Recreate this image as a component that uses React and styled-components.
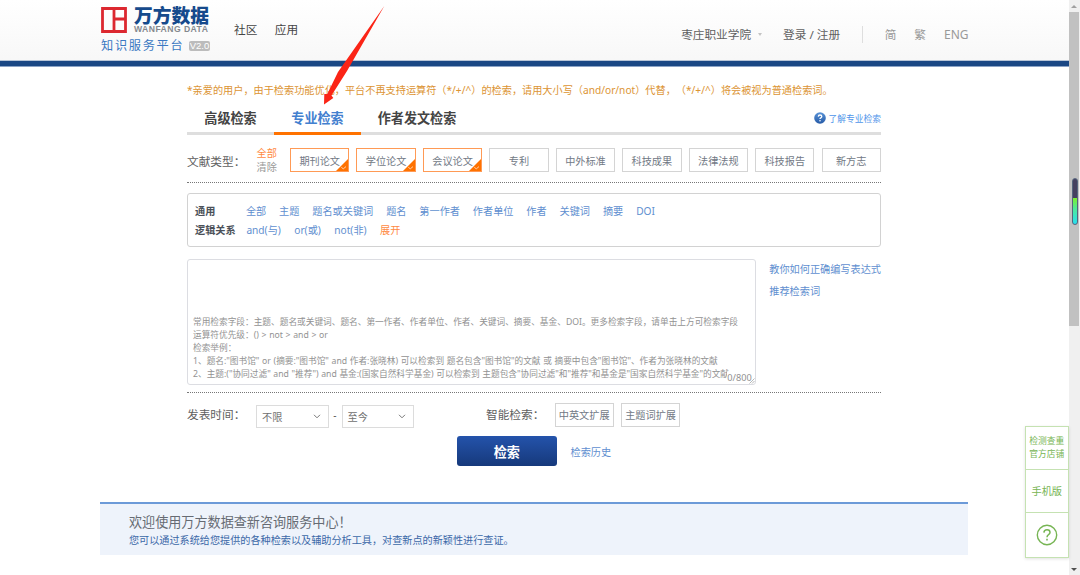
import React from 'react';
import styled, { createGlobalStyle } from 'styled-components';

const GlobalStyle = createGlobalStyle`
    * {
        box-sizing: border-box;
    }

    body {
        margin: 0;
        overflow: hidden;
        background: #fff;
        color: #555;
        font-family: "Noto Sans", "Noto Sans CJK SC", sans-serif;
        font-size: 10.17px;
        text-spacing-trim: space-all;
    }
`;

const Page = styled.div`
    position: relative;
    display: flex;
    width: 1080px;
    height: 575px;
    overflow: hidden;
    white-space: nowrap;
`;

const Content = styled.div`
    flex: 1;
    min-width: 0;
`;

const Header = styled.header`
    display: flex;
    height: 67px;
    padding: 0 100px 0 101px;
    background: linear-gradient(#fff, #f7f7f7);
    border-bottom: 1px solid #8ba3c6;
    box-shadow: inset 0 -5px 0 #1a4784, inset 0 -6px 0 #b7c4d6;
`;

const Logo = styled.div`
    width: 109px;
    padding-top: 7px;
`;

const LogoTop = styled.div`
    display: flex;
    gap: 7px;
    height: 27px;
`;

const LogoName = styled.div`
    height: 18px;
    line-height: 18px;
    font-size: 18.8px;
    font-weight: 900;
    color: #164a8c;
`;

const LogoLatin = styled.div`
    height: 9px;
    line-height: 9px;
    font-family: "Liberation Sans", sans-serif;
    font-size: 8.6px;
    font-weight: 700;
    letter-spacing: 0.45px;
    color: #85888e;
`;

const LogoBottom = styled.div`
    display: flex;
    align-items: center;
    justify-content: space-between;
    height: 21px;
    font-size: 12.2px;
    letter-spacing: 1.7px;
    color: #3b78c2;
`;

const Version = styled.span`
    width: 21px;
    height: 10px;
    margin-top: 2px;
    border-radius: 2px;
    background: #bcbcbc;
    color: #fff;
    font-family: "Liberation Sans", sans-serif;
    font-size: 9.5px;
    line-height: 10px;
    letter-spacing: 0;
    text-align: center;
`;

const Nav = styled.nav`
    display: flex;
    gap: 17.5px;
    padding: 20px 0 0 24px;
    font-size: 11.67px;
    line-height: 20px;
    color: #444;
`;

const UserNav = styled(Nav)`
    gap: 0;
    margin-left: auto;
    padding: 25px 0 0;
    color: #606060;
`;

const Caret = styled.span`
    width: 0;
    height: 0;
    margin: 8px 21px 0 7px;
    border: 2.5px solid transparent;
    border-top: 3px solid #c4c4c4;
`;

const Divider = styled.span`
    width: 1px;
    height: 17px;
    margin: 1px 22px 0 21.5px;
    background: #dedede;
`;

const Lang = styled.span`
    margin-right: ${props => props.$last ? 0 : '18px'};
    color: #999;
    font-size: ${props => props.$last ? '12px' : '11.67px'};
`;

const Main = styled.main`
    width: 694px;
    margin-left: 187px;
`;

const Notice = styled.div`
    height: 33px;
    padding-top: 13px;
    line-height: 20px;
    color: #dc9433;
`;

const Tabs = styled.div`
    display: flex;
    height: 35px;
    box-shadow: inset 0 -3px 0 #dedede;
`;

const Tab = styled.div`
    width: ${props => props.$wide ? '112px' : '87px'};
    padding-top: 8px;
    border-bottom: 3px solid ${props => props.$active ? '#ff7200' : 'transparent'};
    color: ${props => props.$active ? '#4380cf' : '#444'};
    font-size: 13.1px;
    font-weight: 700;
    line-height: 20px;
    text-align: center;
`;

const TabHelp = styled.a`
    display: flex;
    align-items: center;
    gap: 3px;
    height: 20px;
    margin: 8px 0 0 auto;
    color: #5095ea;
    font-size: 8.75px;
`;

const TypeRow = styled.div`
    display: flex;
    align-items: center;
    height: 48px;
    padding-top: 3px;
    border-bottom: 1px dotted #777;
`;

const Label = styled.span`
    width: ${props => props.$width};
    color: #606060;
    font-size: 11.67px;
`;

const AllOrNone = styled.div`
    width: 33.5px;
    line-height: 14px;
    color: #999;
`;

const Orange = styled.span`
    color: #ff8a42;
`;

const TypeList = styled.div`
    display: flex;
    flex: 1;
    justify-content: space-between;
`;

const Tag = styled.span`
    position: relative;
    display: flex;
    align-items: center;
    justify-content: center;
    width: 59.4px;
    height: 24px;
    border: 1px solid ${props => props.$checked ? '#ff9a55' : '#d4d4d4'};
    color: #727985;
`;

const Corner = styled.svg`
    position: absolute;
    right: 0;
    bottom: 0;
`;

const FieldBox = styled.div`
    height: 54px;
    margin-top: 10px;
    padding: 8px 7px;
    border: 1px solid #d2d2d2;
    border-radius: 3px;
`;

const FieldRow = styled.div`
    display: flex;
    gap: ${props => props.$gap || '12.9px'};
    height: 19px;
    line-height: 19px;
    color: #5f8fd0;
`;

const FieldName = styled.b`
    width: 38px;
    color: #4b5058;
`;

const Editor = styled.div`
    display: flex;
    height: 146px;
    padding-top: 12px;
    border-bottom: 1px dotted #777;
`;

const TextBox = styled.div`
    position: relative;
    width: 570px;
    height: 126px;
    padding: 56.4px 5px 0;
    border: 1px solid #dcdde2;
    border-radius: 3px;
    color: #929292;
    font-size: 8.69px;
    line-height: 12.9px;
    word-spacing: 0.4px;
`;

const Counter = styled.span`
    position: absolute;
    right: 3px;
    bottom: 0;
    background: #fff;
    font-size: 9.2px;
    line-height: 12px;
`;

const Grip = styled.svg`
    position: absolute;
    right: 0;
    bottom: 0;
`;

const SideLinks = styled.div`
    padding-left: 13.5px;
    color: #5f8fd0;
    line-height: 21.8px;
`;

const OptionRow = styled.div`
    display: flex;
    height: 43px;
    padding-top: 10px;
    line-height: 24px;
`;

const Select = styled.div`
    display: flex;
    align-items: center;
    justify-content: space-between;
    width: 72.5px;
    height: 23px;
    margin-top: 2px;
    padding: 0 7px 0 5px;
    border: 1px solid #dcdcdc;
    color: #707070;
`;

const Dash = styled.span`
    width: 13px;
    text-align: center;
`;

const SmartSearch = styled.div`
    display: flex;
    gap: 7px;
    margin-left: 72px;
`;

const Actions = styled.div`
    display: flex;
    align-items: center;
    gap: 14px;
    padding-left: 270px;
    color: #5f8fd0;
`;

const Button = styled.button`
    width: 99.5px;
    height: 30px;
    padding: 0;
    border: none;
    border-radius: 3px;
    background: linear-gradient(#2453ab, #16397b);
    color: #fff;
    font-family: inherit;
    font-size: 13.1px;
    font-weight: 700;
`;

const Welcome = styled.section`
    width: 868px;
    height: 53px;
    margin: 36px 0 0 100px;
    padding: 9px 29px 0;
    border-top: 2px solid #6c9ad8;
    background: #eef3fb;
`;

const WelcomeTitle = styled.div`
    height: 19px;
    line-height: 19px;
    color: #666b73;
    font-size: 13.1px;
`;

const WelcomeText = styled.div`
    line-height: 17px;
    color: #3b68a8;
    font-size: 10.13px;
`;

const Scrollbar = styled.div`
    display: flex;
    flex-direction: column;
    align-items: center;
    width: 11.5px;
    background: #f0f0f0;
`;

const Thumb = styled.div`
    width: 10px;
    height: 314px;
    background: #c1c1c1;
`;

const ScrollArrow = styled.span`
    width: 0;
    height: 0;
    margin: ${props => props.$down ? 'auto 0 4px' : '5px 0 4px'};
    border: 3px solid transparent;
    border-${props => props.$down ? 'top' : 'bottom'}-color: ${props => props.$down ? '#505050' : '#a0a0a0'};
    border-${props => props.$down ? 'bottom' : 'top'}-width: 0;
`;

const Gauge = styled.div`
    position: absolute;
    top: 178px;
    right: 2px;
    width: 6px;
    height: 47px;
    border: 1px solid #55647c;
    border-radius: 3px;
    background: linear-gradient(#45405f 19px, #7cf02c 19px, #4de99b 30px, #27dff0);
`;

const FloatMenu = styled.div`
    position: absolute;
    top: 426px;
    right: 11.5px;
    width: 43.5px;
    border: 1px solid #c5e2b2;
    background: #fff;
    box-shadow: 0 1px 3px rgba(0, 0, 0, 0.12);
    color: #77b554;
`;

const FloatItem = styled.div`
    display: flex;
    align-items: center;
    justify-content: center;
    height: 43.2px;
    border-bottom: ${props => props.$last ? 'none' : '1px solid #c5e2b2'};
    font-size: ${props => props.$small ? '8.75px' : '10.2px'};
    line-height: 13px;
`;

const Pointer = styled.svg`
    position: absolute;
    top: 0;
    left: 310px;
`;

const types = ['期刊论文', '学位论文', '会议论文', '专利', '中外标准', '科技成果', '法律法规', '科技报告', '新方志'];
const checkedTypes = 3;
const fields = ['全部', '主题', '题名或关键词', '题名', '第一作者', '作者单位', '作者', '关键词', '摘要', 'DOI'];
const operators = ['and(与)', 'or(或)', 'not(非)'];

const ChevronDown = () => (
    <svg width="8" height="5" viewBox="0 0 8 5">
        <path d="M1 0.8 L4 3.8 L7 0.8" fill="none" stroke="#777" strokeWidth="1" />
    </svg>
);

const SiteHeader = () => (
    <Header>
        <Logo>
            <LogoTop>
                <svg width="26" height="26" viewBox="0 0 26 26">
                    <path d="M1.5 1.5 H24.5 V24.5 H1.5 Z M13 1.5 V24.5 M13 12 H24.5" fill="none" stroke="#dc2830" strokeWidth="2.8" />
                </svg>
                <div>
                    <LogoName>万方数据</LogoName>
                    <LogoLatin>WANFANG DATA</LogoLatin>
                </div>
            </LogoTop>
            <LogoBottom>知识服务平台<Version>V2.0</Version></LogoBottom>
        </Logo>
        <Nav><span>社区</span><span>应用</span></Nav>
        <UserNav>
            <span>枣庄职业学院</span>
            <Caret />
            <span>登录 / 注册</span>
            <Divider />
            <Lang>简</Lang>
            <Lang>繁</Lang>
            <Lang $last>ENG</Lang>
        </UserNav>
    </Header>
);

const SearchTabs = () => (
    <Tabs>
        <Tab>高级检索</Tab>
        <Tab $active>专业检索</Tab>
        <Tab $wide>作者发文检索</Tab>
        <TabHelp>
            <svg width="12" height="12" viewBox="0 0 12 12">
                <defs>
                    <linearGradient id="help" x1="0" y1="0" x2="0" y2="1">
                        <stop offset="0" stopColor="#5a94d8" />
                        <stop offset="1" stopColor="#2459a6" />
                    </linearGradient>
                </defs>
                <circle cx="6" cy="6" r="5.8" fill="url(#help)" />
                <path d="M4.3 4.6 Q4.4 3 6 3 Q7.8 3 7.8 4.5 Q7.8 5.3 6.8 5.8 Q6 6.2 6 7.1" fill="none" stroke="#fff" strokeWidth="1.3" />
                <circle cx="6" cy="8.8" r="0.8" fill="#fff" />
            </svg>
            了解专业检索
        </TabHelp>
    </Tabs>
);

const TypeTag = ({ name, checked }) => (
    <Tag $checked={checked}>
        {name}
        {checked && <Corner width="12" height="12" viewBox="0 0 12 12">
            <path d="M12 0 V12 H0 Z" fill="#ff7200" />
            <path d="M5.3 8.3 L7.3 9.8 L10 7.6" fill="none" stroke="#ffd9bb" strokeWidth="0.9" />
        </Corner>}
    </Tag>
);

const App = () => {
    return <Page>
        <GlobalStyle />
        <Content>
            <SiteHeader />
            <Main>
                <Notice>*亲爱的用户，由于检索功能优化，平台不再支持运算符（*/+/^）的检索，请用大小写（and/or/not）代替，（*/+/^）将会被视为普通检索词。</Notice>
                <SearchTabs />
                <TypeRow>
                    <Label $width="69.5px">文献类型：</Label>
                    <AllOrNone><Orange>全部</Orange><br />清除</AllOrNone>
                    <TypeList>
                        {types.map((name, i) => <TypeTag key={name} name={name} checked={i < checkedTypes} />)}
                    </TypeList>
                </TypeRow>
                <FieldBox>
                    <FieldRow>
                        <FieldName>通用</FieldName>
                        {fields.map(name => <span key={name}>{name}</span>)}
                    </FieldRow>
                    <FieldRow $gap="13.4px">
                        <FieldName>逻辑关系</FieldName>
                        {operators.map(name => <span key={name}>{name}</span>)}
                        <Orange>展开</Orange>
                    </FieldRow>
                </FieldBox>
                <Editor>
                    <TextBox>
                        <div>常用检索字段：主题、题名或关键词、题名、第一作者、作者单位、作者、关键词、摘要、基金、DOI。更多检索字段，请单击上方可检索字段</div>
                        <div>运算符优先级：() &gt; not &gt; and &gt; or</div>
                        <div>检索举例：</div>
                        <div>1、题名:"图书馆" or (摘要:"图书馆" and 作者:张晓林) 可以检索到 题名包含"图书馆"的文献 或 摘要中包含"图书馆"、作者为张晓林的文献</div>
                        <div>2、主题:("协同过滤" and "推荐") and 基金:(国家自然科学基金) 可以检索到 主题包含"协同过滤"和"推荐"和基金是"国家自然科学基金"的文献</div>
                        <Counter>0/800</Counter>
                        <Grip width="6" height="6" viewBox="0 0 6 6">
                            <path d="M0.5 5.5 L5.5 0.5 M3 5.5 L5.5 3" stroke="#999" strokeWidth="0.7" />
                        </Grip>
                    </TextBox>
                    <SideLinks>
                        <div>教你如何正确编写表达式</div>
                        <div>推荐检索词</div>
                    </SideLinks>
                </Editor>
                <OptionRow>
                    <Label $width="69px">发表时间：</Label>
                    <Select>不限<ChevronDown /></Select>
                    <Dash>-</Dash>
                    <Select>至今<ChevronDown /></Select>
                    <SmartSearch>
                        <Label $width="61.5px">智能检索：</Label>
                        <Tag>中英文扩展</Tag>
                        <Tag>主题词扩展</Tag>
                    </SmartSearch>
                </OptionRow>
                <Actions>
                    <Button>检索</Button>
                    <span>检索历史</span>
                </Actions>
            </Main>
            <Welcome>
                <WelcomeTitle>欢迎使用万方数据查新咨询服务中心！</WelcomeTitle>
                <WelcomeText>您可以通过系统给您提供的各种检索以及辅助分析工具，对查新点的新颖性进行查证。</WelcomeText>
            </Welcome>
        </Content>
        <Scrollbar>
            <ScrollArrow />
            <Thumb />
            <ScrollArrow $down />
        </Scrollbar>
        <Gauge />
        <FloatMenu>
            <FloatItem $small>检测查重<br />官方店铺</FloatItem>
            <FloatItem>手机版</FloatItem>
            <FloatItem $last>
                <svg width="22" height="22" viewBox="0 0 22 22" fill="none" stroke="#77b554">
                    <circle cx="11" cy="11" r="9.7" strokeWidth="1.4" />
                    <path d="M7.9 8.6 Q8.1 5.7 11 5.7 Q14 5.7 14 8.4 Q14 9.7 12.5 10.7 Q11 11.7 11 13.3" strokeWidth="1.5" />
                    <path d="M11 14.8 V16.4" strokeWidth="1.6" />
                </svg>
            </FloatItem>
        </FloatMenu>
        <Pointer width="80" height="108" viewBox="310 0 80 108">
            <path d="M384.3 6 L347 71 L331.5 95.5 L333.3 98 L324 104.5 L324.3 94 L327.3 94 L338 72 Z" fill="#fb2416" />
        </Pointer>
    </Page>;
};

export default App;
